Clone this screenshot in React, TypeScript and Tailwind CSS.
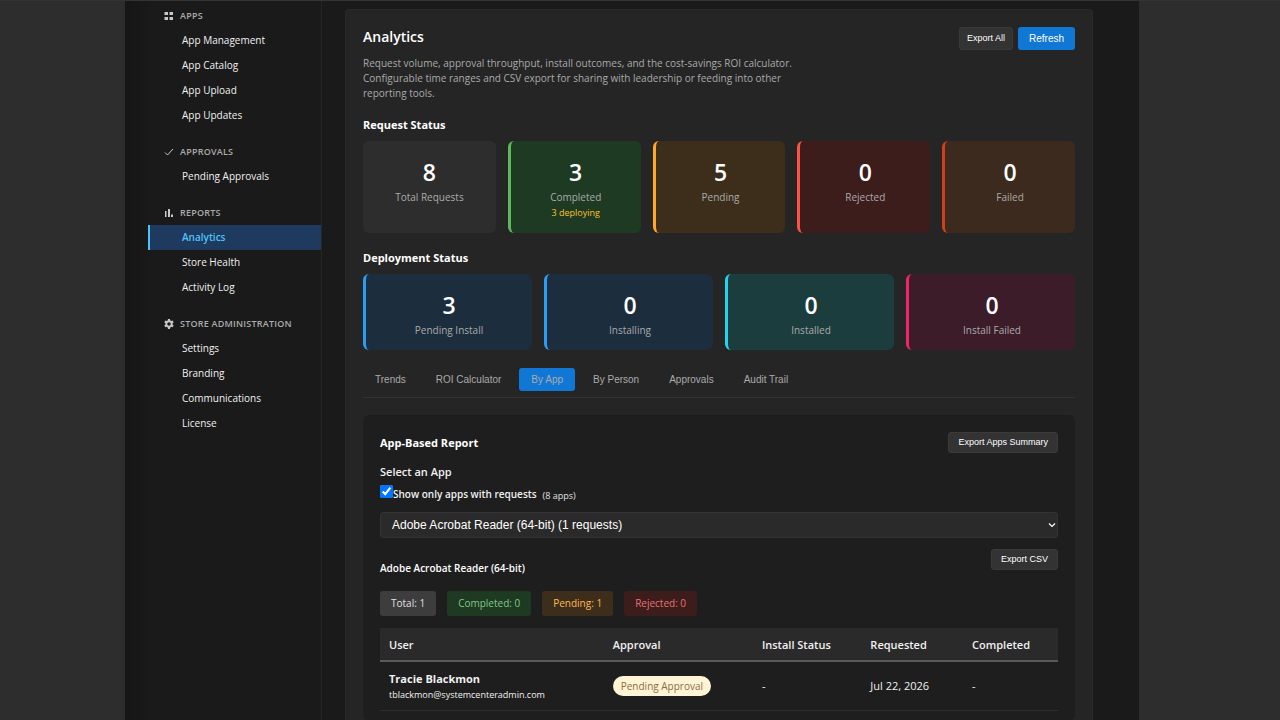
import React from "react";

const navSections = [
  {
    title: "Apps",
    icon: "apps",
    items: ["App Management", "App Catalog", "App Upload", "App Updates"],
  },
  { title: "Approvals", icon: "check", items: ["Pending Approvals"] },
  {
    title: "Reports",
    icon: "chart",
    items: ["Analytics", "Store Health", "Activity Log"],
  },
  {
    title: "Store Administration",
    icon: "gear",
    items: ["Settings", "Branding", "Communications", "License"],
  },
];

const requestStats = [
  { value: 8, label: "Total Requests", style: "bg-[#2d2d2d]" },
  {
    value: 3,
    label: "Completed",
    note: "3 deploying",
    style: "bg-[#1e3a22] border-l-3 border-[#5cb85c]",
  },
  { value: 5, label: "Pending", style: "bg-[#3d2e1c] border-l-3 border-[#ffa726]" },
  { value: 0, label: "Rejected", style: "bg-[#3d1c1c] border-l-3 border-[#ff5144]" },
  { value: 0, label: "Failed", style: "bg-[#3d2a1e] border-l-3 border-[#d13f1a]" },
];

const deploymentStats = [
  { value: 3, label: "Pending Install", style: "bg-[#1c2d3d] border-l-3 border-[#2a9df4]" },
  { value: 0, label: "Installing", style: "bg-[#1c2d3d] border-l-3 border-[#2a9df4]" },
  { value: 0, label: "Installed", style: "bg-[#1c3d3d] border-l-3 border-[#22d3ee]" },
  { value: 0, label: "Install Failed", style: "bg-[#3d1c2a] border-l-3 border-[#f0246a]" },
];

const tabs = ["Trends", "ROI Calculator", "By App", "By Person", "Approvals", "Audit Trail"];

const totals = [
  { text: "Total: 1", style: "bg-[#3d3d3d] text-[#e0e0e0]" },
  { text: "Completed: 0", style: "bg-[#1e3a22] text-[#81c784]" },
  { text: "Pending: 1", style: "bg-[#3d2e1c] text-[#ffb74d]" },
  { text: "Rejected: 0", style: "bg-[#3d1c1c] text-[#e57373]" },
];

const NavIcon = ({ name }: { name: string }) => (
  <svg viewBox="0 0 20 20" className="w-[10px] h-[10px] text-[#c8c8c8]" fill="currentColor">
    {name === "apps" && <path d="M1 2h7v6H1zM11 2h7v6h-7zM1 12h7v6H1zM11 12h7v6h-7z" />}
    {name === "check" && (
      <path d="M2 11l5 5L18 4" fill="none" stroke="currentColor" strokeWidth="2" />
    )}
    {name === "chart" && <path d="M2 6h3v12H2zM8 2h4v16H8zM14 13h4v5h-4z" />}
    {name === "gear" && (
      <path
        fillRule="evenodd"
        d="M8 0h4l.6 2.8 1.9 1.1 2.8-.9 2 3.4-2.1 2v2.8l2.1 2-2 3.4-2.8-.9-1.9 1.1L12 20H8l-.6-3.2-1.9-1.1-2.8.9-2-3.4 2.1-2V8.4L.7 6.4l2-3.4 2.8.9 1.9-1.1zM10 6.500a3.500 3.500 0 100 7 3.500 3.500 0 000-7z"
      />
    )}
  </svg>
);

interface StatCardProps {
  value: number;
  label: string;
  note?: string;
  style: string;
}

const StatCard = ({ value, label, note, style }: StatCardProps) => (
  <div className={`rounded-md pt-4 pb-3 text-center ${style}`}>
    <div className="text-[23px] leading-[30px] font-semibold text-white">{value}</div>
    <div className="mt-[2px] text-[10px] leading-4 text-[#aaaaaa]">{label}</div>
    {note && <div className="text-[9px] leading-4 text-[#fbc02d]">{note}</div>}
  </div>
);

const SmallButton = ({ children }: { children: React.ReactNode }) => (
  <button className="h-[21px] px-[9px] rounded-[3px] border border-[#3a3a3a] bg-[#333333] font-['Liberation_Sans',sans-serif] text-[9px] text-white">
    {children}
  </button>
);

const Sidebar = () => (
  <nav className="w-[174px] shrink-0 border-r border-[#252525] pt-1 flex flex-col gap-[13px]">
    {navSections.map((section) => (
      <div key={section.title}>
        <div className="flex items-center gap-[6px] h-[21px] mb-[2px] pl-4 text-[9px] font-semibold uppercase tracking-wide text-[#aaaaaa]">
          <NavIcon name={section.icon} />
          {section.title}
        </div>
        {section.items.map((item) => (
          <a
            key={item}
            href="#"
            className={`flex items-center h-[25px] pl-8 border-l-2 text-[10px] ${
              item === "Analytics"
                ? "border-[#4fc3f7] bg-[#1e3a5f] font-semibold text-[#4fc3f7]"
                : "border-transparent text-[#f0f0f0]"
            }`}
          >
            {item}
          </a>
        ))}
      </div>
    ))}
  </nav>
);

const AppReport = () => (
  <section className="mt-[17px] flex-1 rounded-md bg-[#1e1e1e] p-[17px] pb-0">
    <div className="flex items-center justify-between">
      <h3 className="text-[11px] leading-5 font-bold text-white">App-Based Report</h3>
      <SmallButton>Export Apps Summary</SmallButton>
    </div>

    <label htmlFor="app" className="block mt-[11px] text-[11px] leading-4 font-semibold text-[#f0f0f0]">
      Select an App
    </label>
    <div className="flex items-start h-[32px] pt-[5px]">
      <input id="only" type="checkbox" defaultChecked className="w-[13px] h-[13px]" />
      <label htmlFor="only" className="pt-px text-[10px] leading-4 font-semibold text-[#f0f0f0]">
        Show only apps with requests
      </label>
      <span className="ml-[6px] pt-[3px] text-[9px] leading-4 text-[#e0e0e0]">(8 apps)</span>
    </div>
    <div className="relative">
      <select
        id="app"
        className="block w-full h-[26px] pl-[11px] appearance-none rounded-[3px] border border-[#333333] bg-[#2a2a2a] font-['Liberation_Sans',sans-serif] text-[12px] text-white"
      >
        <option>Adobe Acrobat Reader (64-bit) (1 requests)</option>
      </select>
      <svg
        viewBox="0 0 8 8"
        className="absolute right-[2px] top-[9px] w-2 h-2 pointer-events-none"
        fill="none"
        stroke="#ffffff"
        strokeWidth="1.2"
      >
        <path d="M1 2.500l3 3 3-3" />
      </svg>
    </div>

    <div className="mt-[11px] flex justify-between">
      <h4 className="pt-[11px] text-[10px] leading-4 font-semibold text-white">
        Adobe Acrobat Reader (64-bit)
      </h4>
      <SmallButton>Export CSV</SmallButton>
    </div>

    <div className="mt-[15px] flex gap-[11px]">
      {totals.map((total) => (
        <span
          key={total.text}
          className={`px-[11px] rounded-[3px] text-[10px] leading-[25px] ${total.style}`}
        >
          {total.text}
        </span>
      ))}
    </div>

    <table className="mt-3 w-full table-fixed text-left text-[11px] text-[#f0f0f0]">
      <thead>
        <tr className="h-[33px] bg-[#2a2a2a] border-b-2 border-[#5a5a5a]">
          <th className="w-[33%] pl-[9px] pt-[2px] font-semibold">User</th>
          <th className="w-[22%] pl-[9px] pt-[2px] font-semibold">Approval</th>
          <th className="w-[16%] pl-[9px] pt-[2px] font-semibold">Install Status</th>
          <th className="w-[15%] pl-[9px] pt-[2px] font-semibold">Requested</th>
          <th className="pl-[9px] pt-[2px] font-semibold">Completed</th>
        </tr>
      </thead>
      <tbody>
        <tr className="h-[49px] border-b border-[#2d2d2d]">
          <td className="pl-[9px] pt-[2px]">
            <div className="leading-4 font-bold">Tracie Blackmon</div>
            <div className="text-[9px] leading-4">tblackmon@systemcenteradmin.com</div>
          </td>
          <td className="pl-[9px]">
            <span className="inline-block px-2 rounded-full bg-[#fff4d6] text-[10px] leading-5 font-medium text-[#8a6d3b]">
              Pending Approval
            </span>
          </td>
          <td className="pl-[9px]">-</td>
          <td className="pl-[9px]">Jul 22, 2026</td>
          <td className="pl-[9px]">-</td>
        </tr>
      </tbody>
    </table>
  </section>
);

const App = () => {
  const [activeTab, setActiveTab] = React.useState("By App");

  return (
    <div className="min-h-screen pr-4 flex justify-center border-t border-[#333333] bg-[#2d2d2d] font-['Open_Sans',sans-serif]">
      <div className="w-full max-w-[1014px] px-[23px] flex bg-linear-to-r from-[#161616] via-[#1a1a1a] via-3% to-[#1a1a1a]">
        <Sidebar />
        <main className="flex-1 min-w-0 px-[23px] pt-2 flex flex-col">
          <div className="flex-1 flex flex-col rounded-t border border-b-0 border-[#292929] bg-[#252525] px-[17px] pt-[17px]">
            <header className="flex items-start justify-between">
              <div>
                <h1 className="text-sm leading-5 font-semibold text-white">Analytics</h1>
                <p className="mt-[9px] max-w-[430px] text-[10px] leading-[15px] text-[#aaaaaa]">
                  Request volume, approval throughput, install outcomes, and the cost-savings ROI
                  calculator. Configurable time ranges and CSV export for sharing with leadership or
                  feeding into other reporting tools.
                </p>
              </div>
              <div className="flex gap-[5px] font-['Liberation_Sans',sans-serif] text-white">
                <button className="h-[23px] px-[7px] rounded-[3px] border border-[#3a3a3a] bg-[#333333] text-[9px]">
                  Export All
                </button>
                <button className="h-[23px] px-[11px] rounded-[3px] bg-[#1177d4] text-[10px]">
                  Refresh
                </button>
              </div>
            </header>

            <h2 className="mt-4 mb-2 text-[11px] leading-4 font-bold text-white">Request Status</h2>
            <div className="grid grid-cols-5 gap-3">
              {requestStats.map((stat) => (
                <StatCard key={stat.label} {...stat} />
              ))}
            </div>

            <h2 className="mt-[17px] mb-2 text-[11px] leading-4 font-bold text-white">
              Deployment Status
            </h2>
            <div className="grid grid-cols-4 gap-3">
              {deploymentStats.map((stat) => (
                <StatCard key={stat.label} {...stat} />
              ))}
            </div>

            <div className="mt-[18px] pb-[6px] flex gap-[6px] border-b border-[#333333] font-['Liberation_Sans',sans-serif]">
              {tabs.map((tab) => (
                <button
                  key={tab}
                  onClick={() => setActiveTab(tab)}
                  className={`h-[23px] px-3 rounded-[3px] text-[10px] text-[#aaaaaa] ${
                    activeTab === tab ? "bg-[#1177d4]" : ""
                  }`}
                >
                  {tab}
                </button>
              ))}
            </div>

            <AppReport />
          </div>
        </main>
      </div>
    </div>
  );
};

export default App;
